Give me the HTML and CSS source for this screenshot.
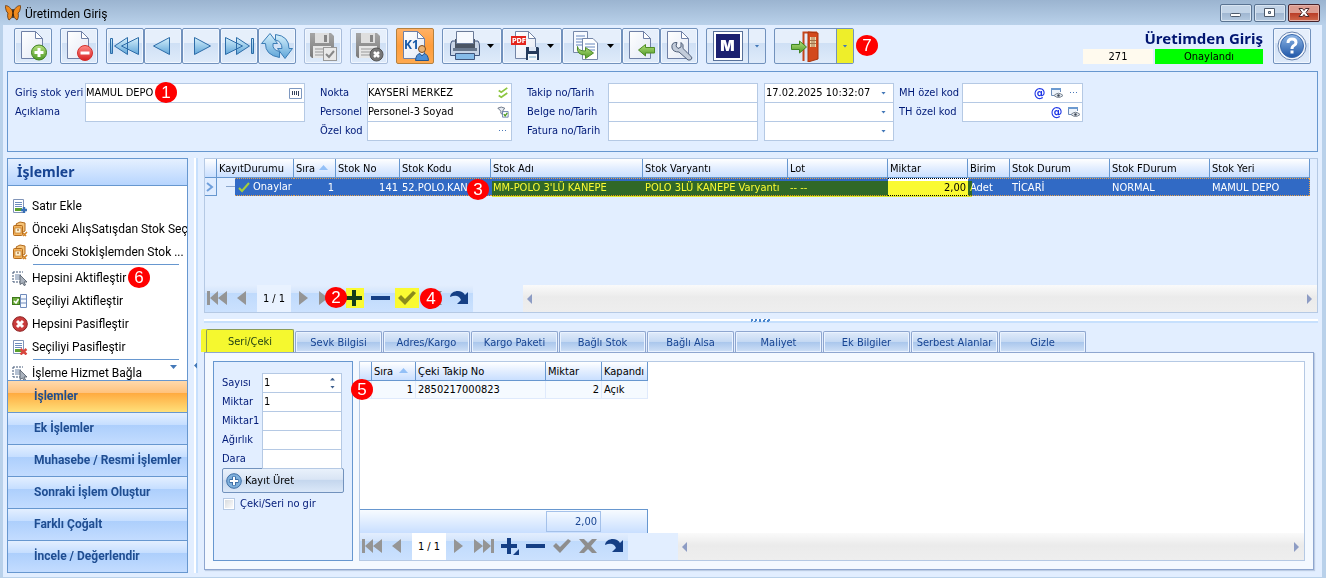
FILE: index.html
```html
<!DOCTYPE html>
<html lang="tr">
<head>
<meta charset="utf-8">
<title>Üretimden Giriş</title>
<link rel="stylesheet" href="styles.css">
</head>
<body>
<svg class="defs" aria-hidden="true">
  <defs>
    <linearGradient id="gBlue" x1="0" y1="0" x2="0" y2="1"><stop offset="0" stop-color="#d5f0fc"/><stop offset="1" stop-color="#5fa5d8"/></linearGradient>
    <linearGradient id="gPage" x1="0" y1="0" x2="1" y2="1"><stop offset="0" stop-color="#ffffff"/><stop offset="1" stop-color="#e3e9f5"/></linearGradient>
    <linearGradient id="gGreen" x1="0" y1="0" x2="0" y2="1"><stop offset="0" stop-color="#b5e07c"/><stop offset="1" stop-color="#4f9a28"/></linearGradient>
    <linearGradient id="gRed" x1="0" y1="0" x2="0" y2="1"><stop offset="0" stop-color="#ff8a86"/><stop offset="1" stop-color="#d8201f"/></linearGradient>
    <linearGradient id="gHelp" x1="0" y1="0" x2="0" y2="1"><stop offset="0" stop-color="#8fb7e6"/><stop offset="1" stop-color="#1f57a8"/></linearGradient>
    <linearGradient id="gGray" x1="0" y1="0" x2="0" y2="1"><stop offset="0" stop-color="#a5a5a5"/><stop offset="1" stop-color="#7a7a7a"/></linearGradient>
    <symbol id="page" viewBox="0 0 32 32"><path d="M4.500 1.500H18.500L25.500 8.500V28.500H4.500Z" fill="url(#gPage)" stroke="#6f80a6"/><path d="M18.500 1.500V8.500H25.500Z" fill="#fff" stroke="#6f80a6"/></symbol>
    <symbol id="floppy" viewBox="0 0 32 32"><path d="M3 3H24L27 6V28H5L3 26Z" fill="url(#gGray)"/><rect x="8" y="3" width="14" height="10" fill="#dedede"/><rect x="17" y="5" width="3" height="7" fill="#858585"/><rect x="6" y="16" width="18" height="12" fill="#e6e6e6"/><path d="M8 19H22M8 22H22M8 25H22" stroke="#999"/></symbol>
    <symbol id="cursor" viewBox="0 0 16 16"><path d="M1 2H11M1 2V12M1 12H8" stroke="#3f5574" stroke-dasharray="2 1" fill="none"/><path d="M3 5H9M3 7H9M3 9H8" stroke="#6c84a5"/><path d="M8 5L15 12L12 12L13.500 15L12 15.500L10.500 13L8 14.500Z" fill="#aab2bd" stroke="#4b5563" stroke-width=".8"/></symbol>
    <symbol id="list" viewBox="0 0 16 16"><path d="M1.500 1.500H11.500V14.500H1.500Z" fill="#fff" stroke="#8094b8"/><path d="M3 4.500H10M3 6.500H10M3 8.500H10" stroke="#6e8cbd"/><rect x="3" y="10" width="7" height="3" fill="#5aa02c"/></symbol>
    <symbol id="boxes" viewBox="0 0 16 16"><path d="M4 3L8 1L13 2V10L9 12Z" fill="#f5c479" stroke="#b36b1e"/><rect x="1.500" y="4.500" width="9" height="10" rx="1" fill="#f3b25a" stroke="#b36b1e"/><rect x="3" y="7" width="6" height="5" fill="#fff0cd" stroke="#b36b1e" stroke-width=".6"/><path d="M5 9H7" stroke="#8a4a10"/><path d="M11 15L15 11M11 12L14 15" stroke="#d28324" stroke-width="1.600"/></symbol>
    <symbol id="first" viewBox="0 0 20 20"><path d="M0 3H3V17H0ZM11 3V17L3 10ZM20 3V17L11 10Z" fill="#959595"/></symbol>
    <symbol id="prev" viewBox="0 0 20 20"><path d="M13 3V17L4 10Z" fill="#959595"/></symbol>
    <symbol id="next" viewBox="0 0 20 20"><path d="M6 3V17L15 10Z" fill="#959595"/></symbol>
    <symbol id="last" viewBox="0 0 20 20"><path d="M20 3H17V17H20ZM9 3V17L17 10ZM0 3V17L9 10Z" fill="#959595"/></symbol>
    <symbol id="plus" viewBox="0 0 20 20"><path d="M7 2H11V8H17V12H11V18H7V12H1V8H7Z" fill="#153f85"/></symbol>
    <symbol id="minus" viewBox="0 0 20 20"><path d="M0 8H19V12H0Z" fill="#153f85"/></symbol>
    <symbol id="tick" viewBox="0 0 20 20"><path d="M1 10L4 7L8 11L16 3L19 5L8 17Z" fill="#8e8e8e"/></symbol>
    <symbol id="cross" viewBox="0 0 20 20"><path d="M1 3H6L10 7L14 3H19L13 10L19 17H14L10 13L6 17H1L7 10Z" fill="#8e8e8e"/></symbol>
    <symbol id="redo" viewBox="0 0 20 20"><path d="M1 9C2 2 13 1 16 7L19 4V16H8L12 12C10 7 6 7 1 9Z" fill="#153f85"/></symbol>
    <symbol id="sl" viewBox="0 0 6 10"><path d="M5 0V10L0 5Z" fill="#8d9cc4"/></symbol>
    <symbol id="sr" viewBox="0 0 6 10"><path d="M0 0V10L5 5Z" fill="#8d9cc4"/></symbol>
    <symbol id="eye" viewBox="0 0 14 12"><path d="M1.500 8.500V1.500H10.500V5M1.500 8.500H4" fill="#eef4fb" stroke="#6c8cb8"/><path d="M1 2H11" stroke="#6c9ad0" stroke-width="2"/><path d="M4 8.500Q8.500 4 13 8.500Q8.500 12.500 4 8.500Z" fill="#dde3ea" stroke="#7a8592"/><circle cx="8.500" cy="8.500" r="1.200" fill="#3c4653"/></symbol>
    <symbol id="dots" viewBox="0 0 8 2"><path d="M0 0H1V1H0ZM3 0H4V1H3ZM6 0H7V1H6Z" fill="#4a78b8"/></symbol>
  </defs>
</svg>

<div class="window">
  <header class="titlebar">
    <svg class="logo" viewBox="0 0 16 16"><path d="M8 7C5 1 1 0 0 1C1 4 1 7 3 8C2 11 3 14 4 15C6 14 7 12 8 9C9 12 10 14 12 15C13 14 14 11 13 8C15 7 15 4 16 1C14 0 11 1 8 7Z" fill="#f08a1c" stroke="#5b3210" stroke-width=".8"/><path d="M8 4V13" stroke="#2d1a08" stroke-width="1.400"/></svg>
    <span class="caption">Üretimden Giriş</span>
    <div class="winbtns">
      <button class="winbtn" aria-label="Küçült"><svg viewBox="0 0 30 16"><rect x="9.500" y="8.500" width="10" height="3" rx="1" fill="#fff" stroke="#4c5a6c"/></svg></button>
      <button class="winbtn" aria-label="Büyüt"><svg viewBox="0 0 30 16"><path d="M9.500 3.500H19.500V11.500H9.500ZM13.500 6.500V8.500H15.500V6.500Z" fill="#fff" fill-rule="evenodd" stroke="#4c5a6c"/></svg></button>
      <button class="winbtn close" aria-label="Kapat"><svg viewBox="0 0 30 16"><path d="M10 3.500H13.500L15 5.500L16.500 3.500H20L17 7.500L20 11.500H16.500L15 9.500L13.500 11.500H10L13 7.500Z" fill="#fff" stroke="#4d2a2a"/></svg></button>
    </div>
  </header>

  <main class="client">
    <div class="toolbar">
      <button class="tool" aria-label="Yeni"><svg viewBox="0 0 32 32"><use href="#page"/><circle cx="22" cy="22.500" r="7.500" fill="url(#gGreen)" stroke="#3e7f1e"/><path d="M22 18V27M17.500 22.500H26.500" stroke="#fff" stroke-width="3"/></svg></button>
      <button class="tool" aria-label="Sil"><svg viewBox="0 0 32 32"><use href="#page"/><circle cx="22" cy="23" r="7.500" fill="url(#gRed)" stroke="#d3302c"/><path d="M17.500 23H26.500" stroke="#fff" stroke-width="3"/></svg></button>
      <div class="toolset">
        <button class="tool" aria-label="İlk"><svg viewBox="0 0 32 32"><path d="M1.500 8.500H3.500V23.500H1.500ZM18.500 7.500V24.500L5.500 16ZM29.500 7.500V24.500L12.500 16Z" fill="url(#gBlue)" stroke="#2d6ca8"/></svg></button>
        <button class="tool" aria-label="Önceki"><svg viewBox="0 0 32 32"><path d="M22.500 7.500V24.500L6.500 16Z" fill="url(#gBlue)" stroke="#2d6ca8"/></svg></button>
        <button class="tool" aria-label="Sonraki"><svg viewBox="0 0 32 32"><path d="M9.500 7.500V24.500L25.500 16Z" fill="url(#gBlue)" stroke="#2d6ca8"/></svg></button>
        <button class="tool" aria-label="Son"><svg viewBox="0 0 32 32"><path d="M30.500 8.500H28.500V23.500H30.500ZM13.500 7.500V24.500L26.500 16ZM2.500 7.500V24.500L19.500 16Z" fill="url(#gBlue)" stroke="#2d6ca8"/></svg></button>
        <button class="tool" aria-label="Yenile"><svg viewBox="0 0 32 32"><path d="M9 3.500L16.500 13.500H12Q11 20 18.500 21.500V27.500Q4 25 4.500 13.500H.5Z" fill="url(#gBlue)" stroke="#3c7db6"/><path d="M24 28.500L16.500 18.500H21Q21 11.500 14.500 10V4.500Q28 6 28 18.500H31.500Z" fill="url(#gBlue)" stroke="#3c7db6"/></svg></button>
      </div>
      <button class="tool off" aria-label="Kaydet"><svg viewBox="0 0 32 32"><use href="#floppy"/><rect x="16.500" y="17.500" width="13" height="13" fill="#e9e9e9" stroke="#999"/><path d="M19 24L22 27L27 21" fill="none" stroke="#888" stroke-width="2"/></svg></button>
      <button class="tool off" aria-label="Vazgeç"><svg viewBox="0 0 32 32"><use href="#floppy"/><circle cx="23.500" cy="24.500" r="6.500" fill="#777" stroke="#555"/><path d="M21 22L26 27M26 22L21 27" stroke="#fff" stroke-width="2.500"/></svg></button>
      <button class="tool hot" aria-label="Kullanıcı K1"><svg viewBox="0 0 32 32"><use href="#page"/><text x="5" y="19" class="k1">K1</text><circle cx="23" cy="19" r="3.500" fill="#e8b377" stroke="#7d4a1c"/><path d="M16.500 30.500Q17 24 21 23.500L23 26L25 23.500Q29 24 29.500 30.500Z" fill="#4b8fd8" stroke="#25548d"/></svg></button>
      <div class="toolset">
        <button class="tool drop" aria-label="Yazdır"><svg viewBox="0 0 32 32"><path d="M3 11Q1.500 13 1.500 16V25.500H30.500V16Q30.500 13 29 11Z" fill="#c9d5e6" stroke="#40557c"/><path d="M6 9H26V18H6Z" fill="#4b5564"/><path d="M7.500 1.500H24.500V13.500H7.500Z" fill="#f6f9fe" stroke="#6b7b98"/><rect x="4" y="18" width="24" height="3" fill="#69788d"/><path d="M6.500 23.500H25.500V29.500H6.500Z" fill="#86bbe8" stroke="#40557c"/></svg><i class="caret"></i></button>
        <button class="tool drop" aria-label="PDF"><svg viewBox="0 0 32 32"><path d="M6.500 1.500H19.500L26.500 8.500V28.500H6.500Z" fill="url(#gPage)" stroke="#7385a6"/><path d="M19.500 1.500V8.500H26.500Z" fill="#fff" stroke="#7385a6"/><rect x="2" y="6" width="15" height="9" fill="#e3241c"/><text x="3" y="13" class="pdf">PDF</text><path d="M17 17H29L30 18V30H17Z" fill="#253b5c"/><rect x="20" y="17" width="7" height="4" fill="#dce6f5"/><path d="M19 24H28V30H19Z" fill="#f5f9fd"/><path d="M20 27H27" stroke="#72a9cc"/></svg><i class="caret"></i></button>
        <button class="tool drop" aria-label="Aktar"><svg viewBox="0 0 32 32"><path d="M4.500 1.500H18.500V22.500H4.500Z" fill="#f7faff" stroke="#7688aa"/><path d="M7 6H16M7 9H15M7 12H13M7 15H13" stroke="#6787bd"/><path d="M13.500 8.500H24L28.500 13V29.500H13.500Z" fill="#fff" stroke="#7688aa"/><path d="M16 14H26M16 17H26M16 20H26" stroke="#6787bd"/><path d="M8.500 16.500Q9 21 16.500 21V17.500L24.500 23L16.500 28.500V25Q7 25 8.500 16.500Z" fill="url(#gGreen)" stroke="#4e8c26"/></svg><i class="caret"></i></button>
        <button class="tool" aria-label="İçe al"><svg viewBox="0 0 32 32"><use href="#page"/><path d="M13.500 20L20.500 14.500V17.500H29.500V23H20.500V26Z" fill="url(#gGreen)" stroke="#4e8c26"/></svg></button>
        <button class="tool" aria-label="Ayarlar"><svg viewBox="0 0 32 32"><use href="#page"/><path d="M14 12.500Q8 12 9 18Q10 22 16 22L25 30Q28 31 29 28Q29 27 20 18.500Q21 14 18 12.500V17L15 18.500L13 16Z" fill="#c3ccda" stroke="#505f78"/></svg></button>
      </div>
      <div class="split">
        <button class="main" aria-label="M"><span class="mlogo">M</span></button>
        <button class="arrow" aria-label="M seçenekleri"><i class="caret blue"></i></button>
      </div>
      <div class="split exit">
        <button class="main" aria-label="Çıkış"><svg viewBox="0 0 32 32"><path d="M13.500 31V2.500H27" fill="none" stroke="#c4471d" stroke-width="2"/><path d="M18 2L28 3V29L18 32Z" fill="#d3491d" stroke="#a8350f"/><path d="M20 7H26V17H20Z" fill="#f2dcb0"/><path d="M22 7V17M24 7V17M20 10.500H26M20 13.500H26" stroke="#a2714a"/><path d="M1.500 14.500H9.500V11L16.500 17L9.500 23V19.500H1.500Z" fill="url(#gGreen)" stroke="#3f8722"/></svg></button>
        <button class="arrow" aria-label="Çıkış seçenekleri"><i class="caret blue"></i></button>
        <span class="badge b7">7</span>
      </div>
      <div class="docinfo">
        <h1>Üretimden Giriş</h1>
        <div class="status"><span class="docno">271</span><span class="state">Onaylandı</span></div>
      </div>
      <button class="tool" aria-label="Yardım"><svg viewBox="0 0 32 32"><circle cx="16" cy="16" r="14" fill="#f4f8fd" stroke="#6782ad"/><circle cx="16" cy="16" r="11.500" fill="url(#gHelp)" stroke="#3a69ad"/><path d="M12 13Q12 9 16 9Q20 9 20 12.500Q20 14.500 18 15.500Q16 16.500 16 19" fill="none" stroke="#fff" stroke-width="3"/><rect x="14.500" y="20.500" width="3" height="3" fill="#fff"/></svg></button>
    </div>

    <section class="head">
      <div class="fields g1">
        <label for="f1">Giriş stok yeri</label><div class="field"><input id="f1" value="MAMUL DEPO"><button class="ibtn bars" aria-label="Depo seç"><svg viewBox="0 0 13 11"><path d="M.5.5H12.500V10.500H.5Z" fill="#fff" stroke="#7e98c0"/><path d="M3.500 3V7M5.500 3V7M7.500 3V7M9.500 3V8" stroke="#33415c"/></svg></button><span class="badge b1">1</span></div>
        <label for="f2">Açıklama</label><div class="field"><input id="f2"></div>
      </div>
      <div class="fields g2">
        <label for="f3">Nokta</label><div class="field"><input id="f3" value="KAYSERİ MERKEZ"><button class="ibtn" aria-label="Onayla"><svg viewBox="0 0 14 14"><path d="M2 4L5 6L12 1M2 10L5 12L12 7" fill="none" stroke="#8cc63f" stroke-width="2"/></svg></button></div>
        <label for="f4">Personel</label><div class="field"><input id="f4" value="Personel-3 Soyad"><button class="ibtn" aria-label="Personel seç"><svg viewBox="0 0 14 14"><path d="M1 2.500Q5 0 9 2.500L6.500 6V10L4.500 8.500V6Z" fill="#e7ebf0" stroke="#5b6678"/><path d="M6.500 6.500H13V13H6.500Z" fill="#fff" stroke="#5d79a5"/><path d="M8 9.500L9.500 11.500L12 8" fill="none" stroke="#4d9b1f" stroke-width="1.500"/></svg></button></div>
        <label for="f5">Özel kod</label><div class="field"><input id="f5"><button class="ibtn" aria-label="Özel kod seç"><svg class="dots"><use href="#dots"/></svg></button></div>
      </div>
      <div class="fields g3">
        <label for="f6">Takip no/Tarih</label><div class="field"><input id="f6"></div><div class="field"><select aria-label="Takip tarihi"><option>17.02.2025 10:32:07</option></select><i class="caret blue"></i></div>
        <label for="f7">Belge no/Tarih</label><div class="field"><input id="f7"></div><div class="field"><select aria-label="Belge tarihi"><option></option></select><i class="caret blue"></i></div>
        <label for="f8">Fatura no/Tarih</label><div class="field"><input id="f8"></div><div class="field"><select aria-label="Fatura tarihi"><option></option></select><i class="caret blue"></i></div>
      </div>
      <div class="fields g4">
        <label for="f9">MH özel kod</label><div class="field"><input id="f9"><button class="ibtn at">@</button><button class="ibtn" aria-label="Göster"><svg><use href="#eye"/></svg></button><button class="ibtn" aria-label="Seç"><svg class="dots"><use href="#dots"/></svg></button></div>
        <label for="f10">TH özel kod</label><div class="field"><input id="f10"><button class="ibtn at">@</button><button class="ibtn" aria-label="Göster"><svg><use href="#eye"/></svg></button></div>
      </div>
    </section>

    <div class="work">
      <aside class="side">
        <h2>İşlemler</h2>
        <div class="actions">
          <button class="act"><svg viewBox="0 0 16 16"><use href="#list"/><path d="M12 9V15M9 12H15" stroke="#376fb5" stroke-width="2.400"/></svg>Satır Ekle</button>
          <button class="act"><svg><use href="#boxes"/></svg>Önceki AlışSatışdan Stok Seç</button>
          <button class="act"><svg><use href="#boxes"/></svg>Önceki Stokİşlemden Stok ...</button>
          <hr>
          <button class="act"><svg><use href="#cursor"/></svg>Hepsini Aktifleştir<span class="badge b6">6</span></button>
          <button class="act"><svg viewBox="0 0 16 16"><path d="M8.500 1.500H14.500V14.500H8.500ZM8.500 6H14.500M8.500 10H14.500" fill="#f5f9ff" stroke="#6f8bbb"/><rect x=".5" y="4.500" width="7" height="7" fill="#70ad3e" stroke="#3d7a1b"/><path d="M2 8L4 10L6.500 6" fill="none" stroke="#fff" stroke-width="1.500"/></svg>Seçiliyi Aktifleştir</button>
          <button class="act"><svg viewBox="0 0 16 16"><circle cx="8" cy="8" r="7.300" fill="#c93c3c" stroke="#8c2222"/><path d="M5 5L11 11M11 5L5 11" stroke="#fff" stroke-width="3"/></svg>Hepsini Pasifleştir</button>
          <button class="act"><svg viewBox="0 0 16 16"><use href="#list"/><path d="M8.500 10L14.500 15.500M14.500 10L8.500 15.500" stroke="#d9463e" stroke-width="2.400"/></svg>Seçiliyi Pasifleştir</button>
          <hr>
          <button class="act"><svg><use href="#cursor"/></svg>İşleme Hizmet Bağla</button>
          <i class="caret more"></i>
        </div>
        <nav>
          <button class="nav on">İşlemler</button>
          <button class="nav">Ek İşlemler</button>
          <button class="nav">Muhasebe / Resmi İşlemler</button>
          <button class="nav">Sonraki İşlem Oluştur</button>
          <button class="nav">Farklı Çoğalt</button>
          <button class="nav">İncele / Değerlendir</button>
        </nav>
      </aside>

      <div class="vsplit"><i></i></div>

      <div class="content">
        <section class="grid">
          <div class="gridbody">
            <table class="stock">
              <colgroup><col class="w12"><col class="w77"><col class="w42"><col class="w64"><col class="w91"><col class="w152"><col class="w145"><col class="w100"><col class="w80"><col class="w42"><col class="w100"><col class="w100"><col class="w100"></colgroup>
              <thead><tr><th></th><th>KayıtDurumu</th><th>Sıra<i class="sort"></i></th><th>Stok No</th><th>Stok Kodu</th><th>Stok Adı</th><th>Stok Varyantı</th><th>Lot</th><th>Miktar</th><th>Birim</th><th>Stok Durum</th><th>Stok FDurum</th><th>Stok Yeri</th></tr></thead>
              <tbody><tr>
                <td class="ind"><svg viewBox="0 0 10 12"><path d="M2 2L7 6L2 10" fill="none" stroke="#6f9fdc" stroke-width="2"/></svg></td>
                <td class="clip state-cell"><div><span class="tree"></span><svg viewBox="0 0 12 12"><path d="M1 7L4 10L11 2" fill="none" stroke="#a5cf3a" stroke-width="2"/></svg>Onaylar</div></td>
                <td class="num">1</td><td class="num">141</td><td class="clip">52.POLO.KAN</td>
                <td class="anchor">MM-POLO 3'LÜ KANEPE<span class="mark"></span><span class="badge b3">3</span></td><td>POLO 3LÜ KANEPE Varyantı</td><td>-- --</td>
                <td class="num edit">2,00</td><td>Adet</td><td>TİCARİ</td><td>NORMAL</td><td>MAMUL DEPO</td>
              </tr></tbody>
            </table>
          </div>
          <div class="gridfoot">
            <div class="rec">
              <button aria-label="İlk"><svg><use href="#first"/></svg></button><button aria-label="Önceki"><svg><use href="#prev"/></svg></button>
              <span class="count">1 / 1</span>
              <button aria-label="Sonraki"><svg><use href="#next"/></svg></button><button aria-label="Son"><svg><use href="#last"/></svg></button>
              <button class="lit plus" aria-label="Ekle"><svg><use href="#plus"/></svg></button><button aria-label="Sil"><svg><use href="#minus"/></svg></button>
              <button class="lit" aria-label="Onayla"><svg><use href="#tick"/></svg></button><button aria-label="Vazgeç"><svg><use href="#cross"/></svg></button><button aria-label="Yenile"><svg><use href="#redo"/></svg></button>
              <span class="badge b2">2</span><span class="badge b4">4</span>
            </div>
            <div class="hscroll"><svg><use href="#sl"/></svg><svg><use href="#sr"/></svg></div>
          </div>
        </section>

        <div class="hsplit"><i></i></div>

        <div class="tabs" role="tablist">
          <button class="tab on" role="tab">Seri/Çeki</button><button class="tab" role="tab">Sevk Bilgisi</button><button class="tab" role="tab">Adres/Kargo</button><button class="tab" role="tab">Kargo Paketi</button><button class="tab" role="tab">Bağlı Stok</button><button class="tab" role="tab">Bağlı Alsa</button><button class="tab" role="tab">Maliyet</button><button class="tab" role="tab">Ek Bilgiler</button><button class="tab" role="tab">Serbest Alanlar</button><button class="tab" role="tab">Gizle</button>
        </div>

        <section class="tabpage">
          <form class="entry">
            <div class="fields g5">
              <label for="s1">Sayısı</label><div class="field"><input id="s1" value="1"><span class="spin"><i></i><i></i></span></div>
              <label for="s2">Miktar</label><div class="field"><input id="s2" value="1"></div>
              <label for="s3">Miktar1</label><div class="field"><input id="s3"></div>
              <label for="s4">Ağırlık</label><div class="field"><input id="s4"></div>
              <label for="s5">Dara</label><div class="field"><input id="s5"></div>
            </div>
            <button type="button" class="make"><svg viewBox="0 0 16 16"><circle cx="8" cy="8" r="7.300" fill="#7fb0dc" stroke="#3e6ea6"/><path d="M8 3.500V12.500M3.500 8H12.500" stroke="#3e6ea6" stroke-width="4"/><path d="M8 4V12M4 8H12" stroke="#fff" stroke-width="2"/></svg>Kayıt Üret</button>
            <label class="check"><input type="checkbox">Çeki/Seri no gir</label>
          </form>
          <div class="grid lower">
            <div class="gridbody">
              <table class="seri">
                <colgroup><col class="w12"><col class="w44"><col class="w130"><col class="w56"><col class="w46"></colgroup>
                <thead><tr><th></th><th>Sıra<i class="sort"></i></th><th>Çeki Takip No</th><th>Miktar</th><th>Kapandı</th></tr></thead>
                <tbody><tr><td class="ind"></td><td class="num">1</td><td>2850217000823</td><td class="num">2</td><td>Açık</td></tr></tbody>
              </table>
              <span class="badge b5">5</span>
            </div>
            <div class="sum"><output>2,00</output></div>
            <div class="gridfoot">
              <div class="rec">
                <button aria-label="İlk"><svg><use href="#first"/></svg></button><button aria-label="Önceki"><svg><use href="#prev"/></svg></button>
                <span class="count">1 / 1</span>
                <button aria-label="Sonraki"><svg><use href="#next"/></svg></button><button aria-label="Son"><svg><use href="#last"/></svg></button>
                <button aria-label="Ekle"><svg viewBox="0 0 20 20"><use href="#plus"/><path d="M19 13V19H13Z" fill="#153f85"/></svg></button><button aria-label="Sil"><svg><use href="#minus"/></svg></button>
                <button aria-label="Onayla"><svg><use href="#tick"/></svg></button><button aria-label="Vazgeç"><svg><use href="#cross"/></svg></button><button aria-label="Yenile"><svg><use href="#redo"/></svg></button>
              </div>
              <div class="hscroll"><svg><use href="#sl"/></svg><svg><use href="#sr"/></svg></div>
            </div>
          </div>
        </section>
      </div>
    </div>
  </main>
</div>
</body>
</html>
```

FILE: styles.css
```css
* { box-sizing: border-box; }
body { margin: 0; font: 11px/14px "DejaVu Sans Condensed", "Noto Sans", sans-serif; color: #000; }
button, input, select { font: inherit; color: inherit; margin: 0; padding: 0; border: 0; background: none; border-radius: 0; }
svg { display: block; flex: none; }
i { display: block; flex: none; }
.defs { position: absolute; width: 0; height: 0; }

.window { height: 100vh; display: flex; flex-direction: column; background: #b9d1ea; padding: 0 4px 1px 3px; }
.titlebar { height: 25px; flex: none; display: flex; align-items: center; margin: 0 -4px 0 -3px; padding: 0 6px 0 5px; background: linear-gradient(#9bb4d0, #b9d1ea); }
.logo { width: 16px; height: 16px; }
.caption { margin-left: 4px; padding-top: 2px; font: 12px/16px "Roboto", "Noto Sans", sans-serif; }
.winbtns { display: flex; gap: 2px; margin-left: auto; }
.winbtn { width: 32px; height: 18px; border: 1px solid #5a7391; border-radius: 2px; box-shadow: inset 0 0 0 1px #d9e5f2; background: linear-gradient(#c3d4e7 50%, #9fb6d1 50%, #b5cae0); }
.winbtn svg { width: 30px; height: 16px; }
.winbtn.close { border-color: #46222a; background: linear-gradient(#dc9c90 48%, #b93c26 50%, #d0694c); box-shadow: inset 0 0 0 1px #e5b3a9; }

.client { flex: 1; min-height: 0; display: flex; flex-direction: column; background: #e2eeff; padding: 3px 4px 4px; }
.toolbar { display: flex; gap: 8px; height: 36px; flex: none; padding: 0 7px; color: #001571; }
.toolset { display: flex; }
.tool { width: 38px; height: 36px; display: flex; align-items: center; justify-content: center; border: 1px solid #7292bd; border-radius: 2px; background: linear-gradient(#e6effb 40%, #cfe0f5 42%, #dfebfa); box-shadow: inset 0 0 0 1px #f1f7ff; }
.tool svg, .split svg { width: 32px; height: 32px; }
.tool.off { border-color: #a9bddb; }
.tool.hot { border-color: #b5813f; background: linear-gradient(#ffb166, #ff9d3c 50%, #ffa94f); box-shadow: none; }
.tool.drop { width: 60px; justify-content: flex-start; gap: 6px; padding-left: 6px; }
.k1 { font: bold 12px "Noto Sans", sans-serif; fill: #1659a8; }
.pdf { font: bold 7px "DejaVu Sans Condensed", sans-serif; fill: #fff; }
.caret { width: 7px; height: 4px; background: #000; clip-path: polygon(0 0, 100% 0, 50% 100%); }
.caret.blue { width: 5px; height: 3px; background: #4378b8; }
.split { position: relative; display: flex; width: 60px; border: 1px solid #7292bd; border-radius: 2px; background: linear-gradient(#e6effb 40%, #cfe0f5 42%, #dfebfa); }
.split .main { flex: 1; display: flex; align-items: center; justify-content: center; }
.split .arrow { width: 17px; display: flex; align-items: center; justify-content: center; border-left: 1px solid #7292bd; }
.split.exit { width: 80px; }
.split.exit .arrow { background: #eeee2a; }
.mlogo { width: 30px; height: 30px; display: grid; place-items: center; border: 1px solid #58719a; background: #1c2170; box-shadow: inset 0 0 0 2px #fff; color: #fff; font: 900 15px/20px "Inter", sans-serif; }

.badge { position: absolute; z-index: 5; width: 22px; height: 21px; border-radius: 50%; background: #f00; color: #fff; font: 17px/21px "Liberation Sans", sans-serif; text-align: center; }
.b1 { left: 69px; top: -2px; }
.b2 { left: 120px; top: 2px; }
.b3 { left: -24px; top: 1px; }
.b4 { left: 215px; top: 3px; }
.b5 { left: -9px; top: 17px; }
.b6 { left: 116px; top: 1px; }
.b7 { left: 81px; top: 6px; }

.docinfo { margin-left: auto; display: flex; flex-direction: column; align-items: flex-end; }
.docinfo + .tool { margin-left: 2px; }
h1 { margin: 0; font: bold 15px/21px "Noto Sans", sans-serif; color: #001571; }
.status { display: flex; gap: 2px; text-align: center; line-height: 15px; color: #000; }
.docno { width: 70px; background: #fffaee; }
.state { width: 108px; background: #0f0; }

.head { flex: none; height: 81px; margin-top: 7px; padding: 11px 7px; display: flex; border: 1px solid #6797cf; color: #001571; }
.fields { display: grid; grid-auto-rows: 19px; align-items: start; }
.fields label { line-height: 19px; white-space: nowrap; color: #001a78; }
.g1 { grid-template-columns: 70px 220px; margin-right: 15px; }
.g2 { grid-template-columns: 47px 145px; margin-right: 15px; }
.g3 { grid-template-columns: 81px 156px 130px; margin-right: 5px; }
.g3 .field:nth-child(3n + 2) { margin-right: 6px; }
.g4 { grid-template-columns: 63px 121px; }
.g5 { grid-template-columns: 40px 80px; }
.field { position: relative; height: 20px; display: flex; align-items: center; border: 1px solid #b5c9e4; background: #fff; color: #000; }
.field input, .field select { flex: 1; align-self: flex-start; min-width: 0; width: 0; height: 16px; outline: 0; appearance: none; }
.field select { height: 17px; padding-left: 1px; }
.g5 .field input { padding-left: 1px; }
.field .caret { margin-right: 7px; }
.ibtn { width: 17px; height: 16px; display: flex; align-items: center; justify-content: center; }
.ibtn svg { width: 14px; height: 12px; }
.ibtn.bars svg { width: 13px; height: 11px; }
.ibtn svg.dots { width: 8px; height: 2px; }
.ibtn.at { color: #1d35e6; font: bold 13px/16px "DejaVu Sans Condensed", sans-serif; }

.work { flex: 1; min-height: 0; display: flex; margin-top: 6px; }
.side { width: 181px; flex: none; display: flex; flex-direction: column; border: 1px solid #6797cf; background: #fff; font: 12px/16px "Roboto", "Noto Sans", sans-serif; }
h2 { margin: 0; flex: none; height: 27px; padding-left: 9px; font: bold 14px/26px "Noto Sans", sans-serif; color: #174492; border-bottom: 1px solid #6797cf; background: linear-gradient(#e5f0ff, #b7d5fe); }
.actions { position: relative; flex: 1; min-height: 0; overflow: hidden; padding: 8px 4px 0; }
.act { position: relative; width: 100%; height: 23px; display: flex; align-items: center; gap: 4px; white-space: nowrap; text-align: left; }
.act svg { width: 16px; height: 16px; }
.actions hr { height: 1px; margin: 1px 4px 1px 21px; border: 0; background: #6797cf; }
.more { position: absolute; right: 10px; bottom: 11px; background: #4378b8; }
nav { flex: none; }
.nav { display: block; width: 100%; height: 32px; padding-left: 26px; border-top: 1px solid #6797cf; text-align: left; white-space: nowrap; font: bold 12px/31px "Roboto", "Noto Sans", sans-serif; color: #1f4d91; background: linear-gradient(#e3efff, #c6deff 38%, #adcffc 40%, #c3dcff); }
.nav.on { background: linear-gradient(#ffd9ac, #ffc27c 38%, #ffab40 40%, #ffe07a); }

.vsplit { width: 4px; flex: none; margin: 0 6px; display: flex; align-items: center; background: linear-gradient(90deg, #fff 50%, #c7e0fd 50%); }
.vsplit i { width: 3px; height: 6px; background: #4378b8; clip-path: polygon(100% 0, 100% 100%, 0 50%); }
.content { flex: 1; min-width: 0; display: flex; flex-direction: column; }
.grid { display: flex; flex-direction: column; height: 155px; flex: none; border: 1px solid #b5c9e4; }
.gridbody { position: relative; flex: 1; min-height: 0; }
table { table-layout: fixed; width: 0; border-collapse: separate; border-spacing: 0; white-space: nowrap; }
.w12 { width: 12px; } .w42 { width: 42px; } .w44 { width: 44px; } .w46 { width: 46px; } .w56 { width: 56px; } .w64 { width: 64px; } .w77 { width: 77px; } .w80 { width: 80px; } .w91 { width: 91px; } .w100 { width: 100px; } .w130 { width: 130px; } .w145 { width: 145px; } .w152 { width: 152px; }
th { position: relative; height: 19px; padding: 2px 2px 0; font-weight: normal; text-align: left; border-right: 1px solid #6797cf; border-bottom: 1px solid #6797cf; background: linear-gradient(#fff, #e3eeff 50%, #c9dfff); }
.sort { position: absolute; right: 7px; top: 6px; width: 9px; height: 5px; background: #93c0f7; clip-path: polygon(50% 0, 100% 100%, 0 100%); }
td { height: 18px; padding: 1px 2px 0; }
.num { text-align: right; }
.stock td { --dot: #e9a24a; --cell: #316ac5; background: repeating-linear-gradient(90deg, var(--dot) 0 1px, transparent 1px 2px) top / 100% 1px no-repeat, repeating-linear-gradient(90deg, var(--dot) 0 1px, transparent 1px 2px) bottom / 100% 1px no-repeat, var(--cell); color: #fff; }
.stock td:last-child { border-right: 1px dotted #e9a24a; }
.stock td.edit { --dot: #000; --cell: #fff; color: #000; }
td.ind, .stock td.ind { padding: 0; background: #dfecff; border: solid #6797cf; border-width: 0 1px 1px 0; }
.ind svg { width: 10px; height: 12px; }
.clip { overflow: hidden; }
.stock td.state-cell { padding: 0; }
.state-cell div { display: flex; align-items: center; height: 18px; }
.state-cell svg { width: 12px; height: 12px; margin: 0 3px; }
.tree { width: 18px; height: 18px; background: linear-gradient(#8aa6cc, #8aa6cc) 9px 8px / 9px 1px no-repeat #e2eeff; }
.anchor { position: relative; }
.mark { position: absolute; z-index: 2; left: 1px; top: 3px; width: 480px; height: 16px; background: #fafa32; mix-blend-mode: multiply; }

.gridfoot { position: relative; height: 27px; flex: none; display: flex; gap: 50px; }
.rec { display: flex; align-items: stretch; width: 268px; background: linear-gradient(#e3eefe, #d4e5fc 28%, #bfdafc 30%, #cbe1fe); }
.rec button { width: 26px; display: flex; align-items: center; justify-content: center; padding: 0 2px 2px 0; }
.rec svg { width: 20px; height: 20px; }
.count { width: 34px; text-align: center; line-height: 27px; background: #e9f2ff; }
.lower .count { background: #fff; }
.rec .lit { background: linear-gradient(#fafa32, #fafa32) 0 3px / 24px 20px no-repeat; }
.rec .lit svg { mix-blend-mode: multiply; }
.rec .lit.plus { background-position: 3px 3px; background-size: 18px 20px; }
.hscroll { flex: 1; display: flex; justify-content: space-between; align-items: center; padding: 0 4px; background: linear-gradient(#fafafa, #ebebeb 45%, #eee); }
.hscroll svg { width: 6px; height: 10px; }

.hsplit { flex: none; height: 4px; margin: 6px 0; background: linear-gradient(#fff 50%, #c7e0fd 50%); display: flex; justify-content: center; }
.hsplit i { width: 20px; height: 3px; background: repeating-linear-gradient(110deg, #4a86cd 0 2px, transparent 2px 4px); }

.tabs { flex: none; height: 23px; display: flex; align-items: flex-end; gap: 1px; padding-left: 2px; }
.tab { width: 87px; height: 21px; padding-top: 2px; border: 1px solid #8ea6cf; border-bottom: 0; border-radius: 2px 2px 0 0; box-shadow: inset 0 0 0 1px #eaf3ff; color: #174492; white-space: nowrap; background: linear-gradient(#e0ebfa, #c5d9f3 48%, #a9c6ec 50%, #cfe0f6); }
.tab.on { width: 88px; height: 23px; box-shadow: -5px 0 0 #f5f82f; color: #1c3c14; border-color: #8c9d58; background: #f5f82f; }
.tabpage { flex: 1; min-height: 0; display: flex; gap: 6px; margin: 0 4px 3px 0; padding: 8px; border: 1px solid #8ea6cf; background: #f4f9ff; box-shadow: 1px 1px 1px #bccce4; }
.entry { width: 140px; flex: none; padding: 11px 8px; border: 1px solid #6797cf; background: #e2eeff; }
.make { width: 122px; height: 25px; display: flex; align-items: center; gap: 3px; padding-left: 3px; border: 1px solid #7292bd; border-radius: 2px; background: linear-gradient(#e9f1fb, #d9e5f5 45%, #c5d7ee 50%, #dbe8f8); }
.make svg { width: 16px; height: 16px; }
.check { display: flex; align-items: center; gap: 5px; margin-top: 4px; color: #001a78; }
.check input { appearance: none; width: 12px; height: 12px; margin-left: 1px; border: 1px solid #b5c9e4; background: linear-gradient(135deg, #d4d8dc, #fff); box-shadow: inset 0 0 0 1px #fff; }
.spin { display: grid; gap: 5px; margin-right: 6px; }
.spin i { width: 5px; height: 3px; background: #40618f; clip-path: polygon(0 100%, 50% 0, 100% 100%); }
.spin i + i { clip-path: polygon(0 0, 100% 0, 50% 100%); }
.lower { flex: 1; min-width: 0; height: auto; background: #fff; }
.lower td { background: #f5faff; border-right: 1px solid #dfeafc; border-bottom: 1px solid #dfeafc; }
.sum { flex: none; width: 288px; height: 24px; padding: 1px 46px 1px 0; display: flex; justify-content: flex-end; border: solid #6797cf; border-width: 1px 1px 0 0; background: linear-gradient(#f7fbff, #c9dfff); }
.sum output { width: 55px; padding-right: 3px; text-align: right; line-height: 19px; border: 1px solid #a4c1ea; color: #174492; }
.lower .rec { box-shadow: 50px 0 0 #e2eeff; }
```
